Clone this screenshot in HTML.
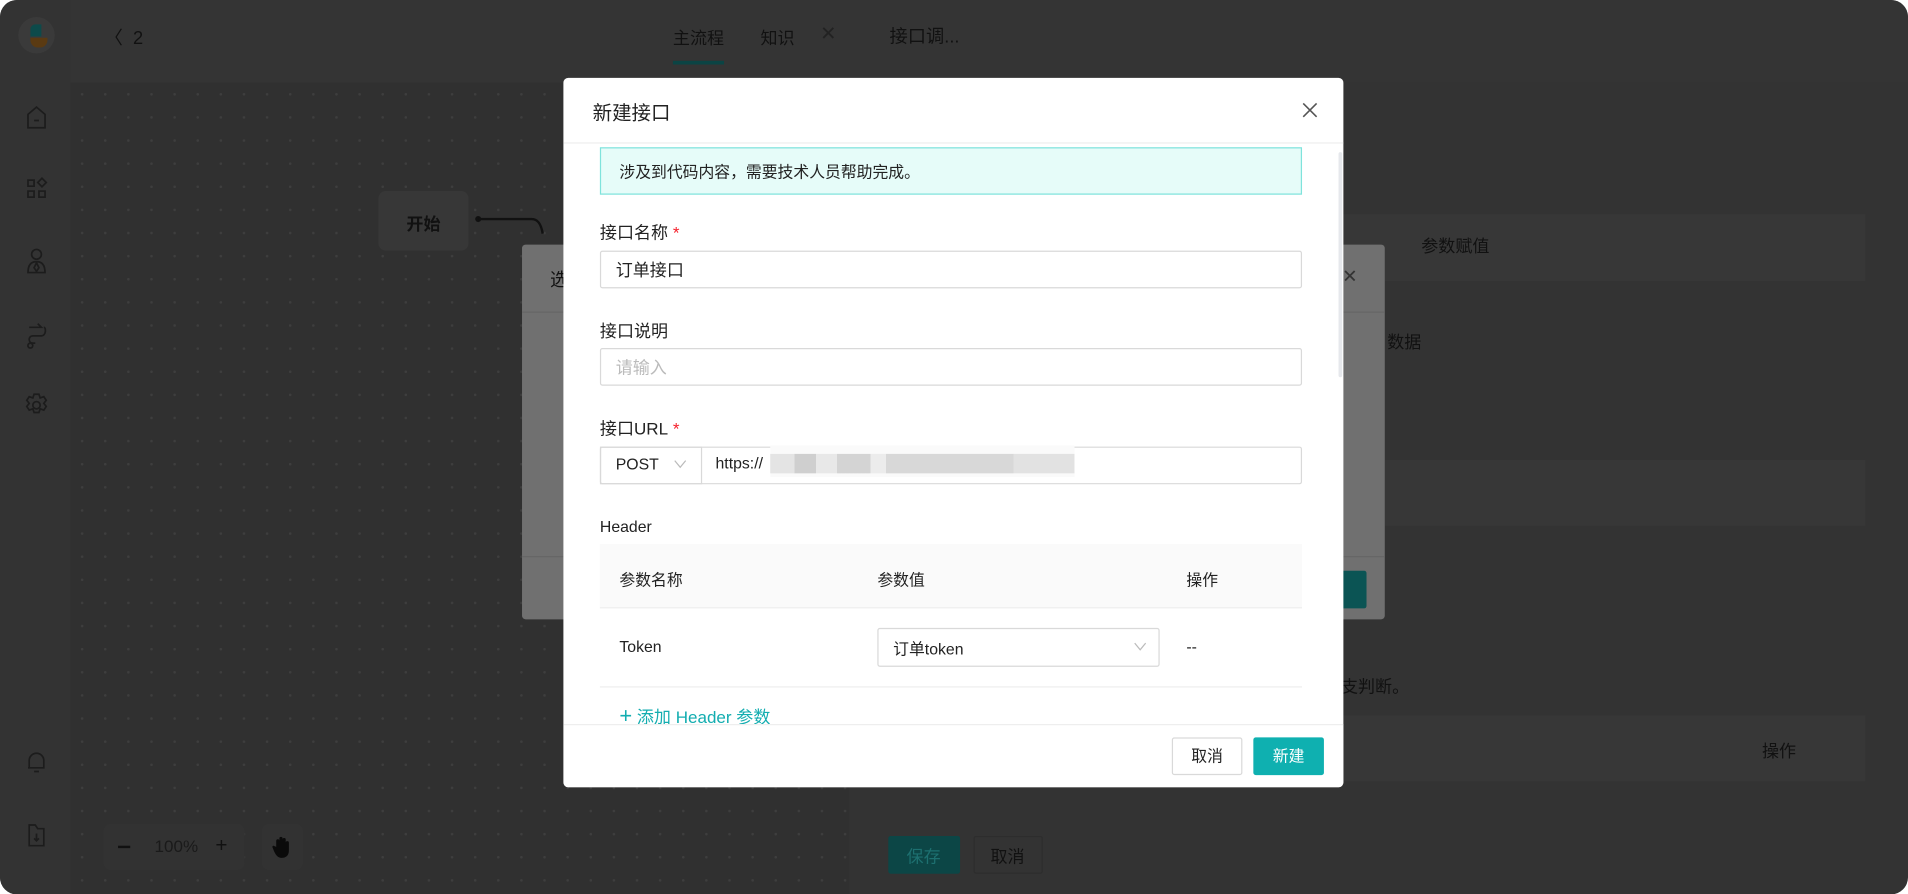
<!DOCTYPE html>
<html><head><meta charset="utf-8">
<style>
*{box-sizing:border-box;margin:0;padding:0}
html,body{width:1908px;height:894px;overflow:hidden;background:#fff}
body{font-family:"Liberation Sans","Noto Sans CJK SC",sans-serif;}
#w{position:absolute;left:0;top:0;width:1568px;height:735px;transform:scale(1.21684);transform-origin:0 0;background:#333;border-radius:14px;overflow:hidden}
.a{position:absolute;white-space:nowrap}
.dots{background-image:radial-gradient(#3e3e3e 1px,transparent 1.2px);background-size:19px 19px}
.t{font-size:14px;color:#111}
.ic{stroke:#1c1c1c;fill:none;stroke-width:1.4}
.lbl{position:absolute;left:30px;font-size:14px;color:#222}
.inp{position:absolute;left:30px;width:577px;height:31px;border:1px solid #d9d9d9;border-radius:2px;font-size:14px;padding:6px 12px;color:#222}
.star{color:#f5222d;margin-left:4px}
</style></head><body><div id="w">
<!-- sidebar -->
<div class="a" style="left:0;top:0;width:58px;height:735px;background:#333"></div>
<div class="a" style="left:15px;top:14px;width:30px;height:30px;border-radius:50%;background:#3a3a3a"></div>
<div class="a" style="left:25px;top:20px;width:9px;height:10px;background:#0d4a4a;border-radius:4px 0 0 0"></div>
<div class="a" style="left:25px;top:31px;width:14px;height:8px;background:#5a3a12;border-radius:0 0 6px 6px"></div>
<svg class="a" style="left:18px;top:84px" width="24" height="24" viewBox="0 0 24 24"><path class="ic" d="M5 21V10l7-6 7 6v11zM10 15h4"/></svg>
<svg class="a" style="left:18px;top:143px" width="24" height="24" viewBox="0 0 24 24"><path class="ic" d="M5 5h5v5H5zM5 14h5v5H5zM14 14h5v5h-5zM16.5 3.5l3.5 3.5-3.5 3.5-3.5-3.5z"/></svg>
<svg class="a" style="left:18px;top:202px" width="24" height="26" viewBox="0 0 24 26"><path class="ic" d="M12 3a4 4 0 1 1 0 8a4 4 0 1 1 0-8zM5 22c0-7 3-9 7-9s7 2 7 9zM12 14l-2 4 2 3 2-3z"/></svg>
<svg class="a" style="left:18px;top:262px" width="24" height="26" viewBox="0 0 24 26"><path class="ic" d="M6 7h10l-3-3M18 7c2 0 2 7-2 7H9c-4 0-4 6 0 6h2M7 20a2 2 0 1 1-.1 0"/></svg>
<svg class="a" style="left:18px;top:321px" width="24" height="24" viewBox="0 0 24 24"><circle class="ic" cx="12" cy="12" r="3"/><path class="ic" d="M10 3h4l1 3 3-1 2 3-2 2.5 2 2.5-2 3-3-1-1 3h-4l-1-3-3 1-2-3 2-2.5-2-2.5 2-3 3 1z"/></svg>
<svg class="a" style="left:18px;top:614px" width="24" height="24" viewBox="0 0 24 24"><path class="ic" d="M6 17V11a6 6 0 0 1 12 0v6H5M10 20h4"/></svg>
<svg class="a" style="left:18px;top:674px" width="24" height="24" viewBox="0 0 24 24"><path class="ic" d="M6 4h5l2 3h5v14H6zM12 11v6M10 15l2 2 2-2"/></svg>
<!-- canvas -->
<div class="a dots" style="left:58px;top:68px;width:640px;height:667px;background-color:#303030"></div>
<div class="a" style="left:58px;top:0;width:1510px;height:68px;background:#343434"></div>
<div class="a t" style="left:86px;top:20px;font-size:15px">〈&nbsp; 2</div>
<div class="a t" style="left:553px;top:21px;font-size:14px">主流程</div>
<div class="a" style="left:553px;top:50px;width:42px;height:3px;background:#0b4444"></div>
<div class="a t" style="left:625px;top:21px">知识</div>
<div class="a" style="left:674px;top:18px;color:#222;font-size:16px">✕</div>
<div class="a t" style="left:731px;top:19px;font-size:15px">接口调...</div>
<div class="a" style="left:311px;top:157px;width:74px;height:49px;background:#373737;border-radius:6px"></div>
<div class="a t" style="left:334px;top:174px;font-weight:bold">开始</div>
<svg class="a" style="left:385px;top:172px" width="80" height="40"><circle cx="8" cy="8" r="2.5" fill="#111"/><path d="M8 8h44c6 0 8 6 9 12" stroke="#111" stroke-width="2" fill="none"/></svg>
<div class="a" style="left:85px;top:677px;width:116px;height:38px;background:#323232;border-radius:6px"></div>
<div class="a" style="left:97px;top:695px;width:10px;height:2px;background:#111"></div>
<div class="a t" style="left:127px;top:687px;color:#1a1a1a">100%</div>
<div class="a t" style="left:177px;top:685px;font-size:17px">+</div>
<div class="a" style="left:215px;top:677px;width:34px;height:38px;background:#323232;border-radius:6px"></div>
<svg class="a" style="left:223px;top:686px" width="18" height="20" viewBox="0 0 18 20"><path d="M4 10V5a1.3 1.3 0 0 1 2.6 0V9V3a1.3 1.3 0 0 1 2.6 0v6V4a1.3 1.3 0 0 1 2.6 0v6V6.5a1.3 1.3 0 0 1 2.6 0V13c0 4-2.5 6-6 6-3 0-4.5-2-6-5L1 10.5c-.6-1 .6-2 1.5-1.2z" fill="#0a0a0a"/></svg>
<!-- right panel -->
<div class="a" style="left:1090px;top:176px;width:443px;height:55px;background:#373737"></div>
<div class="a t" style="left:1168px;top:192px">参数赋值</div>
<div class="a t" style="left:1140px;top:271px">数据</div>
<div class="a" style="left:1090px;top:378px;width:443px;height:54px;background:#373737"></div>
<div class="a t" style="left:1102px;top:554px">支判断。</div>
<div class="a" style="left:1090px;top:588px;width:443px;height:54px;background:#373737"></div>
<div class="a t" style="left:1448px;top:607px">操作</div>
<div class="a" style="left:730px;top:687px;width:59px;height:31px;background:#0c4646;border-radius:2px"></div>
<div class="a" style="left:745px;top:694px;color:#1d7070;font-size:14px">保存</div>
<div class="a" style="left:800px;top:687px;width:57px;height:31px;border:1px solid #2d2d2d;border-radius:2px"></div>
<div class="a t" style="left:814px;top:694px">取消</div>
<!-- back dialog -->
<div class="a" style="left:429px;top:201px;width:709px;height:308px;background:#707070;border-radius:3px"></div>
<div class="a t" style="left:452px;top:219px;font-size:15px">选</div>
<div class="a" style="left:1103px;top:218px;color:#333;font-size:15px">✕</div>
<div class="a" style="left:429px;top:256px;width:709px;height:1px;background:#666"></div>
<div class="a" style="left:429px;top:457px;width:709px;height:1px;background:#666"></div>
<div class="a" style="left:1100px;top:469px;width:23px;height:31px;background:#0b5454;border-radius:2px"></div>
<!-- modal -->
<div class="a" style="left:463px;top:64px;width:641px;height:583px;background:#fff;border-radius:4px;overflow:hidden;white-space:normal">
  <div class="a" style="left:24px;top:15px;font-size:16px;color:#222">新建接口</div>
  <svg class="a" style="left:607px;top:20px" width="13" height="13"><path d="M1 1l11 11M12 1L1 12" stroke="#555" stroke-width="1.3"/></svg>
  <div class="a" style="left:0;top:53px;width:641px;height:1px;background:#eee"></div>
  <div class="a" style="left:637px;top:61px;width:3px;height:185px;background:#e6e8ec;border-radius:2px"></div>
  <div class="a" style="left:30px;top:57px;width:577px;height:39px;background:#e6fcf9;border:1px solid #7fe3dc;font-size:13px;color:#222;padding:9px 15px">涉及到代码内容，需要技术人员帮助完成。</div>
  <div class="lbl" style="top:117px">接口名称<span class="star">*</span></div>
  <div class="inp" style="top:142px;padding-top:5px">订单接口</div>
  <div class="lbl" style="top:198px">接口说明</div>
  <div class="inp" style="top:222px;color:#bbb;padding-top:5px">请输入</div>
  <div class="lbl" style="top:278px">接口URL<span class="star">*</span></div>
  <div class="inp" style="top:303px;padding:0"></div>
  <div class="a" style="left:30px;top:303px;width:84px;height:31px;border:1px solid #d9d9d9;font-size:13px;color:#222;padding:6px 12px">POST</div>
  <svg class="a" style="left:91px;top:314px" width="10" height="7"><path d="M0.5 0.5L5 6l4.5-5.5" stroke="#bbb" fill="none"/></svg>
  <div class="a" style="left:125px;top:309px;font-size:13px;color:#222">https://</div>
  <div class="a" style="left:170px;top:302px;width:250px;height:26px;background:#fafafa"></div>
  <div class="a" style="left:170px;top:309px;width:250px;height:16px;background:linear-gradient(90deg,#e4e4e4 0 8%,#cfcfcf 8% 15%,#e8e8e8 15% 22%,#d4d4d4 22% 33%,#ececec 33% 38%,#d8d8d8 38% 80%,#e2e2e2 80% 100%)"></div>
  <div class="lbl" style="top:361px;font-size:13px">Header</div>
  <div class="a" style="left:30px;top:383px;width:577px;height:53px;background:#fafafa;border-bottom:1px solid #eee"></div>
  <div class="a" style="left:46px;top:402px;font-size:13px;color:#222">参数名称</div>
  <div class="a" style="left:258px;top:402px;font-size:13px;color:#222">参数值</div>
  <div class="a" style="left:512px;top:402px;font-size:13px;color:#222">操作</div>
  <div class="a" style="left:46px;top:460px;font-size:13px;color:#222">Token</div>
  <div class="a" style="left:258px;top:452px;width:232px;height:32px;border:1px solid #d9d9d9;border-radius:2px;font-size:13px;color:#222;padding:6px 12px">订单token</div>
  <svg class="a" style="left:469px;top:464px" width="10" height="7"><path d="M0.5 0.5L5 6l4.5-5.5" stroke="#bbb" fill="none"/></svg>
  <div class="a" style="left:512px;top:460px;font-size:13px;color:#222">--</div>
  <div class="a" style="left:30px;top:500px;width:577px;height:1px;background:#eee"></div>
  <div class="a" style="left:46px;top:514px;font-size:14px;color:#13adb0"><b style="font-size:18px;font-weight:normal">+</b> 添加 Header 参数</div>
  <div class="a" style="left:0;top:531px;width:641px;height:52px;background:#fff;border-top:1px solid #eee"></div>
  <div class="a" style="left:500px;top:542px;width:58px;height:31px;border:1px solid #d9d9d9;border-radius:2px;font-size:13px;color:#222;text-align:center;line-height:29px">取消</div>
  <div class="a" style="left:567px;top:542px;width:58px;height:31px;background:#0fb0b0;border-radius:2px;font-size:13px;color:#fff;text-align:center;line-height:31px">新建</div>
</div>
</div></body></html>
